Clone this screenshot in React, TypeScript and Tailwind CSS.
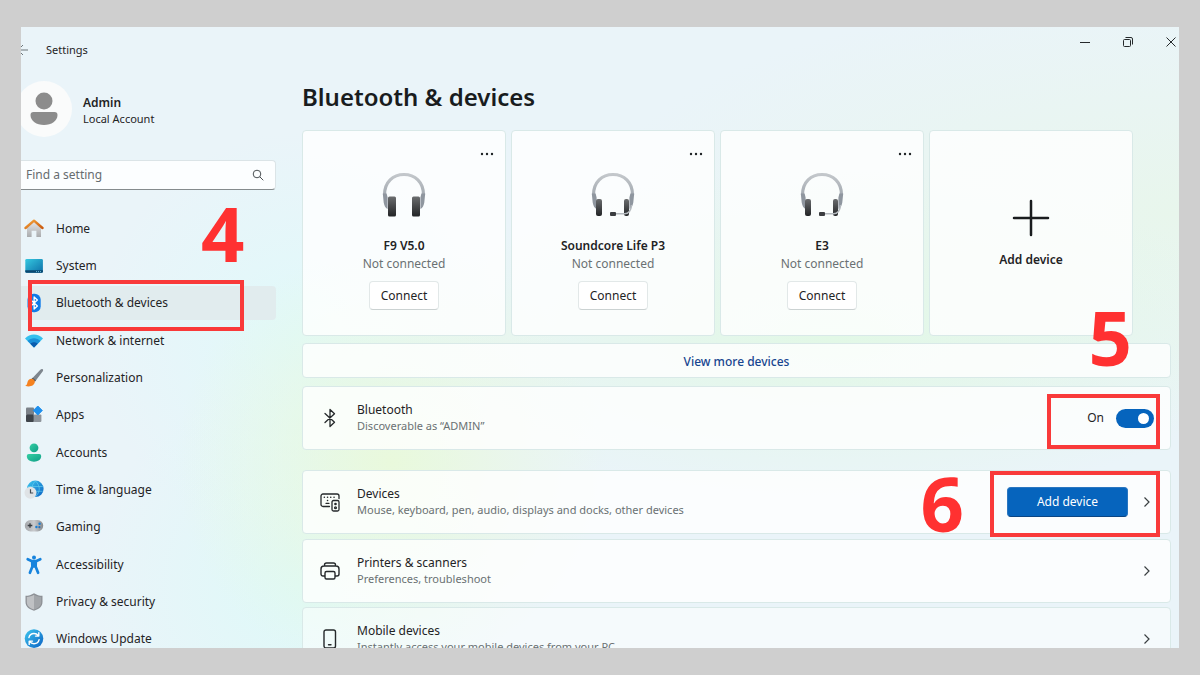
import type { ReactNode } from "react";

type NavItem = { label: string; icon: ReactNode; active?: boolean };

function Glyph({ children }: { children: ReactNode }) {
  return (
    <svg viewBox="0 0 20 20" className="size-5 shrink-0" aria-hidden="true">
      {children}
    </svg>
  );
}

function Gradients() {
  return (
    <svg className="absolute size-0" aria-hidden="true">
      <defs>
        <linearGradient id="roof" x1="0" y1="0" x2="1" y2="1">
          <stop offset="0" stopColor="#f7a63b" />
          <stop offset="1" stopColor="#c9590f" />
        </linearGradient>
        <linearGradient id="wall" x1="0" y1="0" x2="0" y2="1">
          <stop offset="0" stopColor="#e6e6e8" />
          <stop offset="1" stopColor="#a9abad" />
        </linearGradient>
        <linearGradient id="screen" x1="0" y1="0" x2="1" y2="1">
          <stop offset="0" stopColor="#35c8e0" />
          <stop offset="1" stopColor="#0d6fa8" />
        </linearGradient>
        <linearGradient id="teal" x1="0" y1="0" x2="1" y2="1">
          <stop offset="0" stopColor="#35cfa4" />
          <stop offset="1" stopColor="#0f9e86" />
        </linearGradient>
        <linearGradient id="sky" x1="0" y1="0" x2="1" y2="1">
          <stop offset="0" stopColor="#3ec6ee" />
          <stop offset="1" stopColor="#0b62c4" />
        </linearGradient>
        <linearGradient id="steel" x1="0" y1="0" x2="1" y2="0">
          <stop offset="0" stopColor="#a3a6aa" />
          <stop offset="0.5" stopColor="#c9cbce" />
          <stop offset="1" stopColor="#85888c" />
        </linearGradient>
        <linearGradient id="band" x1="0" y1="0" x2="0" y2="1">
          <stop offset="0" stopColor="#c3c7cb" />
          <stop offset="1" stopColor="#a4aab1" />
        </linearGradient>
        <linearGradient id="pad" x1="0" y1="0" x2="0" y2="1">
          <stop offset="0" stopColor="#6b6d6f" />
          <stop offset="1" stopColor="#222426" />
        </linearGradient>
      </defs>
    </svg>
  );
}

const navItems: NavItem[] = [
  {
    label: "Home",
    icon: (
      <Glyph>
        <path d="M3 8.500 10 2.500l7 6V18h-4.600v-6.200H7.600V18H3z" fill="url(#wall)" />
        <path d="M1.500 9 10 1.700 18.500 9" fill="none" stroke="url(#roof)" strokeWidth="2.400" strokeLinecap="round" strokeLinejoin="round" />
      </Glyph>
    ),
  },
  {
    label: "System",
    icon: (
      <Glyph>
        <rect x="1.300" y="3" width="17.600" height="13.800" rx="1.300" fill="url(#screen)" />
        <path d="M1.300 14.300h17.600v1.200a1.300 1.300 0 0 1-1.300 1.300H2.600a1.300 1.300 0 0 1-1.300-1.300z" fill="#0b4770" />
        <path d="M12 15.600h1M14 15.600h1M16 15.600h1" stroke="#7fd6f0" strokeWidth="0.800" />
      </Glyph>
    ),
  },
  {
    label: "Bluetooth & devices",
    active: true,
    icon: (
      <Glyph>
        <rect x="3.500" y="0.800" width="13.200" height="18.400" rx="6" fill="#0f7be8" />
        <path d="m6.600 6.800 6.800 6.200-3.300 3V4l3.300 3-6.800 6.200" fill="none" stroke="#fff" strokeWidth="1.300" strokeLinejoin="round" strokeLinecap="round" />
      </Glyph>
    ),
  },
  {
    label: "Network & internet",
    icon: (
      <Glyph>
        <path d="M10 16.500 1 7.400C5.800 2.200 14.200 2.200 19 7.400z" fill="#35c0ee" />
        <path d="M10 16.500 3.600 10C7 6.400 13 6.400 16.400 10z" fill="#1a8fd8" />
        <path d="M10 16.500 6.300 12.700C8.300 10.700 11.700 10.700 13.700 12.700z" fill="#0b5cad" />
      </Glyph>
    ),
  },
  {
    label: "Personalization",
    icon: (
      <Glyph>
        <path d="M18.700 1.200c.8.700.3 1.700-.3 2.600L11.500 13 8.300 10.200l7.800-8.100c.8-.9 1.800-1.600 2.600-.9z" fill="#7e868e" />
        <path d="m8.700 9.800 3.200 2.800-1 1.200-3.300-2.900z" fill="#4b5259" />
        <path d="M7.400 10.700c2.200.1 3.700 1.600 3.400 3.500-.4 3-4.400 5.300-9.600 3.600 2.300-1 1.700-2.500 2.600-4.600.7-1.600 2-2.600 3.600-2.500z" fill="#f58220" />
      </Glyph>
    ),
  },
  {
    label: "Apps",
    icon: (
      <Glyph>
        <rect x="2" y="2.500" width="8" height="7.500" rx="1" fill="#7b8188" />
        <rect x="2" y="9.500" width="8" height="7.500" rx="1" fill="#3f444a" />
        <rect x="9.600" y="9.500" width="7.800" height="7.500" rx="1" fill="#8e949b" />
        <path d="m13.800 1 4.500 4.500-4.500 4.500-4.500-4.500z" fill="#1e90ee" stroke="#1e90ee" strokeLinejoin="round" />
      </Glyph>
    ),
  },
  {
    label: "Accounts",
    icon: (
      <Glyph>
        <circle cx="10" cy="4.800" r="4.400" fill="url(#teal)" />
        <path d="M4.800 11h10.400a2 2 0 0 1 2 2c0 3.600-3.300 5.700-7.200 5.700s-7.200-2.100-7.200-5.700a2 2 0 0 1 2-2z" fill="url(#teal)" />
      </Glyph>
    ),
  },
  {
    label: "Time & language",
    icon: (
      <Glyph>
        <circle cx="11.300" cy="8.800" r="8.300" fill="url(#sky)" />
        <path d="M3.800 6.500h15M3.800 11.300h15M11.500 1c-5 5-5 11 0 15.600M11.500 1c5 5 5 11 0 15.600" fill="none" stroke="#6bd3f0" strokeWidth="0.600" />
        <circle cx="6.500" cy="12.700" r="6" fill="#dfe3e6" />
        <path d="M6.500 9.300v3.700h2.700" fill="none" stroke="#454b52" strokeWidth="1.200" />
      </Glyph>
    ),
  },
  {
    label: "Gaming",
    icon: (
      <Glyph>
        <rect x="0.800" y="3" width="18.400" height="11.400" rx="5.700" fill="url(#steel)" />
        <path d="M6 6.200v4.600M3.700 8.500h4.600" stroke="#3a3e43" strokeWidth="1.300" />
        <circle cx="12.400" cy="10" r="1.200" fill="#1680d8" />
        <circle cx="15.600" cy="6.800" r="1.200" fill="#1680d8" />
        <circle cx="15.400" cy="10.200" r="1.100" fill="#2f6fb0" />
      </Glyph>
    ),
  },
  {
    label: "Accessibility",
    icon: (
      <Glyph>
        <circle cx="10" cy="2.500" r="2" fill="#1683dd" />
        <path d="M3.700 4.200 8 6.200h4l4.300-2M10 6.500v5M8.200 7l.2 4.500-2.500 6.300M11.800 7l-.2 4.500 2.500 6.300" fill="none" stroke="#1683dd" strokeWidth="2.700" strokeLinecap="round" strokeLinejoin="round" />
      </Glyph>
    ),
  },
  {
    label: "Privacy & security",
    icon: (
      <Glyph>
        <path d="M10 1.200c2.600 1.700 5.300 2.500 8.500 2.600v6c0 4.700-3.300 7.300-8.500 9-5.200-1.700-8.500-4.300-8.500-9v-6c3.200-.1 5.900-.9 8.500-2.600z" fill="#8d9095" />
        <path d="M10 2.700c2.300 1.400 4.600 2.100 7.200 2.200v5c0 3.800-2.600 6-7.200 7.500z" fill="#a2a5a9" />
        <path d="M10 2.700C7.700 4.100 5.400 4.800 2.800 4.900v5c0 3.800 2.600 6 7.200 7.500z" fill="#bfc1c4" />
      </Glyph>
    ),
  },
  {
    label: "Windows Update",
    icon: (
      <Glyph>
        <circle cx="10" cy="9.600" r="9.300" fill="url(#sky)" />
        <path d="M4.900 8.600C5.500 6 7.500 4.500 10 4.500c1.900 0 3.300.8 4.400 2.200M14.800 3.800v3.300h-3.300M15.100 10.600c-.6 2.600-2.600 4.100-5.100 4.100-1.900 0-3.300-.8-4.400-2.200M5.200 15.400v-3.300h3.300" fill="none" stroke="#fff" strokeWidth="1.400" strokeLinecap="round" strokeLinejoin="round" />
      </Glyph>
    ),
  },
];

function Headphones({ mic }: { mic: boolean }) {
  return (
    <svg viewBox="0 0 46 46" className="size-[46px]" aria-hidden="true">
      <path d="M3.500 24C3.500 11 12 3.500 23 3.500S42.500 11 42.500 24" fill="none" stroke="url(#band)" strokeWidth="3.200" />
      <path d="M1.800 22.500h3.800l1 4v11.500c-2.300-1.200-3.400-3.500-3.900-6.500zM44.200 22.500h-3.800l-1 4v11.500c2.300-1.200 3.400-3.500 3.900-6.500z" fill="#8f969f" />
      {mic ? (
        <>
          <rect x="6" y="28" width="6" height="17" rx="2" fill="url(#pad)" />
          <rect x="34" y="28" width="5" height="17" rx="2" fill="url(#pad)" />
          <path d="M41.500 34c-.5 5.500-2.500 8.800-7 8.800H25" fill="none" stroke="#b4b9be" strokeWidth="1.600" />
          <rect x="20" y="41" width="6" height="4" rx="1" fill="#3b3d40" />
        </>
      ) : (
        <>
          <rect x="7" y="25.500" width="8" height="20" rx="1.500" fill="url(#pad)" />
          <rect x="31" y="25.500" width="8" height="20" rx="1.500" fill="url(#pad)" />
        </>
      )}
    </svg>
  );
}

function Chevron() {
  return (
    <svg viewBox="0 0 10 12" className="mr-0.5 h-3 w-2.5" fill="none" stroke="#3a3f42" strokeWidth="1.200" aria-hidden="true">
      <path d="m2.500 1.500 4.500 4.500-4.500 4.500" />
    </svg>
  );
}

function Callout({ className, children }: { className: string; children: string }) {
  return (
    <span className={`pointer-events-none absolute z-20 font-['Open_Sans',sans-serif] text-[76px] leading-[76px] font-bold text-[#ff3131] ${className}`}>
      {children}
    </span>
  );
}

function Frame({ className }: { className: string }) {
  return <span className={`pointer-events-none absolute z-10 border-4 border-[#f93a3a] ${className}`} />;
}

function Row({ icon, title, detail, children, className = "bg-white/80" }: { icon: ReactNode; title: string; detail: string; children?: ReactNode; className?: string }) {
  return (
    <section className={`relative flex h-16 shrink-0 items-center rounded border border-[#d9e9e8] pr-4 pl-4 ${className}`}>
      <span className="flex w-[22px] justify-center">{icon}</span>
      <div className="ml-4 flex-1">
        <h2 className="text-[12px] leading-4 text-[#1f2325]">{title}</h2>
        <p className="text-[11px] leading-4 text-[#6a7173]">{detail}</p>
      </div>
      {children}
    </section>
  );
}

const devices = [
  { name: "F9 V5.0", mic: false },
  { name: "Soundcore Life P3", mic: true },
  { name: "E3", mic: true },
];

export default function App() {
  return (
    <div className="h-screen bg-[#cfcfcf] px-[21px] py-[27px] font-['Noto_Sans',sans-serif] text-[#1f2325]">
      <Gradients />
      <div className="flex h-full flex-col overflow-hidden bg-[#eaf4f9] bg-[radial-gradient(circle_at_32%_70%,#e9f9dc_0%,transparent_24%),radial-gradient(circle_at_24%_50%,#e0f9fa_0%,transparent_22%),radial-gradient(circle_at_24%_90%,#def9f8_0%,transparent_20%),radial-gradient(ellipse_at_70%_50%,#e2f8e6_0%,transparent_38%),radial-gradient(ellipse_at_100%_30%,#e8f6ec_0%,transparent_36%)]">
        <header className="flex h-[46px] shrink-0 items-center justify-between">
          <div className="flex items-center">
            <button aria-label="Back" className="-ml-1">
              <svg viewBox="0 0 12 12" className="size-3" fill="none" stroke="#6c7478" aria-hidden="true">
                <path d="M11 6H1M6 1 1 6l5 5" />
              </svg>
            </button>
            <span className="ml-[17px] text-[11px]">Settings</span>
          </div>
          <div className="flex h-[30px] items-center gap-[31px] self-start pr-0.5 text-[#25292b]">
            <button aria-label="Minimize">
              <svg viewBox="0 0 12 12" className="size-3" stroke="currentColor" aria-hidden="true">
                <path d="M1 6.500h10" />
              </svg>
            </button>
            <button aria-label="Restore">
              <svg viewBox="0 0 12 12" className="size-3" fill="none" stroke="currentColor" aria-hidden="true">
                <rect x="1.500" y="3.500" width="7" height="7" rx="1" />
                <path d="M3.500 1.500H9A1.500 1.500 0 0 1 10.500 3v5.500" />
              </svg>
            </button>
            <button aria-label="Close">
              <svg viewBox="0 0 12 12" className="size-3" stroke="currentColor" aria-hidden="true">
                <path d="m1.500 1.500 9 9m0-9-9 9" />
              </svg>
            </button>
          </div>
        </header>

        <div className="flex min-h-0 flex-1">
          <aside className="w-[255px] shrink-0 pt-2">
            <div className="flex items-center">
              <div className="-ml-[5px] flex size-14 items-center justify-center rounded-full bg-[#fafbfb]">
                <svg viewBox="0 0 28 34" className="h-[34px] w-7" fill="#8c8c8c" aria-hidden="true">
                  <circle cx="14" cy="9" r="8.500" />
                  <path d="M3.500 20h21a3 3 0 0 1 3 3c0 6-6 10-13.500 10S.5 29 .5 23a3 3 0 0 1 3-3z" />
                </svg>
              </div>
              <div className="ml-[11px] pt-1 text-[11px] leading-4">
                <p className="text-[12px] font-semibold">Admin</p>
                <p>Local Account</p>
              </div>
            </div>

            <label className="mt-[23px] flex h-[30px] items-center rounded-r border border-l-0 border-[#dbe4e7] border-b-[#858b8d] bg-[#fcfeff] pr-[11px] pl-[5px]">
              <input
                type="text"
                aria-label="Find a setting"
                placeholder="Find a setting"
                className="min-w-0 flex-1 bg-transparent text-[12px] outline-none placeholder:text-[#666c6f]"
              />
              <svg viewBox="0 0 12 12" className="size-3" fill="none" stroke="#4a5053" aria-hidden="true">
                <circle cx="5" cy="5" r="3.800" />
                <path d="m7.800 7.800 3.500 3.500" />
              </svg>
            </label>

            <nav className="relative mt-5 grid h-[448px] auto-rows-fr items-center">
              {navItems.map((item) => (
                <a
                  key={item.label}
                  href="#"
                  className={`relative flex h-[34px] items-center rounded-r pl-[3px] text-[12px] ${item.active ? "bg-[#e1ecee]" : ""}`}
                >
                  {item.icon}
                  <span className="ml-3">{item.label}</span>
                  {item.active && <Frame className="-top-1.5 left-[7px] h-[51px] w-[216px]" />}
                </a>
              ))}
              <Callout className="-top-[15px] left-[180px]">4</Callout>
            </nav>
          </aside>

          <main className="ml-[26px] flex min-w-0 flex-1 flex-col pt-2 pr-2">
            <h1 className="text-[24px] leading-8 font-semibold text-[#191c1e]">Bluetooth &amp; devices</h1>

            <div className="mt-[17px] flex gap-[5px]">
              {devices.map((device) => (
                <article key={device.name} className="flex h-[206px] w-[204px] shrink-0 flex-col items-center rounded border border-[#d9e9e8] bg-white/80">
                  <div className="flex h-10 w-full items-center justify-end pt-1.5 pr-[11px]">
                    <button aria-label={`More options for ${device.name}`}>
                      <svg viewBox="0 0 14 4" className="h-1 w-3.5" fill="#1f2325" aria-hidden="true">
                        <circle cx="2" cy="2" r="1.200" />
                        <circle cx="7" cy="2" r="1.200" />
                        <circle cx="12" cy="2" r="1.200" />
                      </svg>
                    </button>
                  </div>
                  <Headphones mic={device.mic} />
                  <h2 className="mt-5 text-[12px] leading-[18px] font-semibold">{device.name}</h2>
                  <p className="text-[12px] leading-[18px] text-[#6a7173]">Not connected</p>
                  <button className="mt-2 h-[29px] rounded border border-[#e2e8e8] border-b-[#cbd2d2] bg-white px-[11px] text-[12px]">Connect</button>
                </article>
              ))}
              <button className="flex h-[206px] w-[204px] shrink-0 flex-col items-center justify-center gap-3.5 rounded border border-[#d9e9e8] bg-white/80 pt-0.5">
                <svg viewBox="0 0 38 38" className="size-[38px]" stroke="#191c1e" strokeWidth="2.500" strokeLinecap="round" aria-hidden="true">
                  <path d="M19 2v34M2 19h34" />
                </svg>
                <span className="text-[12px] leading-[18px] font-semibold">Add device</span>
              </button>
            </div>

            <div className="relative mt-[7px] flex">
              <a href="#" className="flex h-[35px] flex-1 items-center justify-center rounded border border-[#d9e9e8] bg-white/80 pt-0.5 text-[12px] font-medium text-[#17458f]">
                View more devices
              </a>
              <Callout className="-top-11 right-[39px]">5</Callout>
            </div>

            <div className="mt-2 flex flex-col gap-5">
              <Row
                title="Bluetooth"
                detail="Discoverable as “ADMIN”"
                icon={
                  <svg viewBox="0 0 14 20" className="h-5 w-3.5" fill="none" stroke="#25292b" strokeWidth="1.300" strokeLinejoin="round" strokeLinecap="round" aria-hidden="true">
                    <path d="m2 5.500 9.500 8.700L7 18.500v-17l4.500 4.300L2 14.500" />
                  </svg>
                }
              >
                <label className="flex items-center gap-3 text-[12px]">
                  On
                  <input
                    type="checkbox"
                    role="switch"
                    defaultChecked
                    aria-label="Bluetooth"
                    className="relative h-[19px] w-[38px] appearance-none rounded-full bg-[#0664bd] before:absolute before:top-1 before:left-1 before:size-[11px] before:rounded-full before:bg-white checked:before:left-[22px]"
                  />
                </label>
                <Frame className="top-[7px] right-2.5 h-[55px] w-[113px]" />
              </Row>
              <Row
                title="Devices"
                detail="Mouse, keyboard, pen, audio, displays and docks, other devices"
                icon={
                  <svg viewBox="0 0 20 20" className="size-5" fill="none" stroke="#25292b" strokeWidth="1.300" strokeLinecap="round" aria-hidden="true">
                    <path d="M9.500 14.500H3A2 2 0 0 1 1 12.500V4a2 2 0 0 1 2-2h14a2 2 0 0 1 2 2v2.500M6 11.300h3" />
                    <path d="M4.300 5.200h.1M7.500 5.200h.1M10.700 5.200h.1M14 5.200h.1M7.500 8.500h.1" strokeWidth="1.500" />
                    <rect x="12" y="8.500" width="7" height="10.500" rx="1.500" />
                    <circle cx="15.500" cy="12" r="0.700" />
                    <circle cx="15.500" cy="15.800" r="0.900" />
                  </svg>
                }
              >
                <button className="mr-3.5 h-[30px] w-[121px] rounded border border-[#2a76c0] border-b-[#0a4583] bg-[#0664bd] text-[12px] text-white">Add device</button>
                <Chevron />
                <Frame className="top-0 right-2.5 h-[66px] w-[170px]" />
                <Callout className="-top-1.5 right-[206px]">6</Callout>
              </Row>
            </div>
            <div className="mt-[5px] flex flex-col gap-1">
              <Row
                title="Printers & scanners"
                detail="Preferences, troubleshoot"
                icon={
                  <svg viewBox="0 0 20 20" className="size-5" fill="none" stroke="#25292b" strokeWidth="1.400" strokeLinejoin="round" aria-hidden="true">
                    <path d="M5 15H3a2 2 0 0 1-2-2V8a3 3 0 0 1 3-3h12a3 3 0 0 1 3 3v5a2 2 0 0 1-2 2h-2M4.500 5V4a2 2 0 0 1 2-2h7a2 2 0 0 1 2 2v1" />
                    <rect x="5" y="10.500" width="10" height="7.500" rx="1.500" />
                  </svg>
                }
              >
                <Chevron />
              </Row>
              <Row
                title="Mobile devices"
                detail="Instantly access your mobile devices from your PC"
                className="bg-white/50"
                icon={
                  <svg viewBox="0 0 14 20" className="h-5 w-3.5" fill="none" stroke="#25292b" strokeWidth="1.400" strokeLinecap="round" aria-hidden="true">
                    <rect x="1" y="1" width="11.500" height="18" rx="2" />
                    <path d="M5.500 15.800h2.500" />
                  </svg>
                }
              >
                <Chevron />
              </Row>
            </div>
          </main>
        </div>
      </div>
    </div>
  );
}
